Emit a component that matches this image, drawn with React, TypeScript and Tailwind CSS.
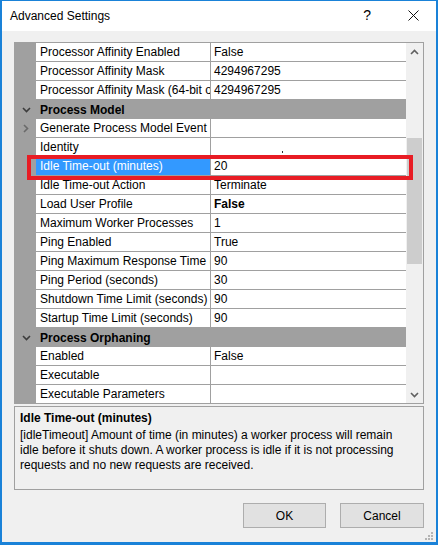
import React from 'react';

type Row =
  | { kind: 'header'; label: string }
  | { kind: 'prop'; name: string; value: string; bold?: boolean; expandable?: boolean; selected?: boolean; dot?: boolean };

const rows: Row[] = [
  { kind: 'prop', name: 'Processor Affinity Enabled', value: 'False' },
  { kind: 'prop', name: 'Processor Affinity Mask', value: '4294967295' },
  { kind: 'prop', name: 'Processor Affinity Mask (64-bit option)', value: '4294967295' },
  { kind: 'header', label: 'Process Model' },
  { kind: 'prop', name: 'Generate Process Model Event Log Entry', value: '', expandable: true },
  { kind: 'prop', name: 'Identity', value: '', dot: true },
  { kind: 'prop', name: 'Idle Time-out (minutes)', value: '20', selected: true },
  { kind: 'prop', name: 'Idle Time-out Action', value: 'Terminate' },
  { kind: 'prop', name: 'Load User Profile', value: 'False', bold: true },
  { kind: 'prop', name: 'Maximum Worker Processes', value: '1' },
  { kind: 'prop', name: 'Ping Enabled', value: 'True' },
  { kind: 'prop', name: 'Ping Maximum Response Time (seconds)', value: '90' },
  { kind: 'prop', name: 'Ping Period (seconds)', value: '30' },
  { kind: 'prop', name: 'Shutdown Time Limit (seconds)', value: '90' },
  { kind: 'prop', name: 'Startup Time Limit (seconds)', value: '90' },
  { kind: 'header', label: 'Process Orphaning' },
  { kind: 'prop', name: 'Enabled', value: 'False' },
  { kind: 'prop', name: 'Executable', value: '' },
  { kind: 'prop', name: 'Executable Parameters', value: '' },
];

const ChevronDown = () => (
  <svg width="9" height="6" viewBox="0 0 9 6" fill="none" stroke="#3c3c3c" strokeWidth="1.6">
    <path d="M1 1l3.5 3.5L8 1" />
  </svg>
);

const ChevronRight = () => (
  <svg width="6" height="9" viewBox="0 0 6 9" fill="none" stroke="#6a6a6a" strokeWidth="1.6">
    <path d="M1 1l3.5 3.5L1 8" />
  </svg>
);

function GridRow({ row }: { row: Row }) {
  if (row.kind === 'header') {
    return (
      <div className="flex h-[19px] shrink-0 items-center bg-[#a0a0a0]">
        <div className="flex w-[21px] shrink-0 justify-center pl-[1px]">
          <ChevronDown />
        </div>
        <span className="pl-[4px] font-bold text-black">{row.label}</span>
      </div>
    );
  }
  return (
    <div className="flex h-[19px] shrink-0">
      <div className="flex w-[21px] shrink-0 items-center justify-center bg-[#a0a0a0] pl-[1px]">
        {row.expandable && <ChevronRight />}
      </div>
      <div
        className={
          row.selected
            ? 'flex w-[175px] shrink-0 items-center overflow-hidden whitespace-nowrap border-r border-b border-[#a0a0a0] bg-[#3399ff] pl-[4px] text-white'
            : 'flex w-[175px] shrink-0 items-center overflow-hidden whitespace-nowrap border-r border-b border-[#a0a0a0] bg-white pl-[4px] text-black'
        }
      >
        {row.name}
      </div>
      <div
        className={
          row.bold
            ? 'flex flex-1 items-center overflow-hidden whitespace-nowrap border-b border-[#a0a0a0] bg-white pl-[3px] font-bold text-black'
            : 'flex flex-1 items-center overflow-hidden whitespace-nowrap border-b border-[#a0a0a0] bg-white pl-[3px] text-black'
        }
      >
        {row.value}
        {row.dot && <span className="mt-[9px] ml-[68px] h-[2px] w-[1px] bg-[#333]" />}
      </div>
    </div>
  );
}

export default function App() {
  return (
    <div
      className="relative flex h-[545px] w-[438px] flex-col border-x-2 border-t border-b-[3px] border-[#1a82d8] bg-[#f0f0f0] text-[12px] text-black"
      style={{ fontFamily: '"Liberation Sans", Arial, sans-serif' }}
    >
      {/* title bar */}
      <div className="flex h-[30px] shrink-0 items-center bg-white pl-[8px] pb-[1px]">
        <span className="text-[12px]">Advanced Settings</span>
        <span className="ml-auto mr-[37px] text-[14px]">?</span>
        <svg width="11" height="11" viewBox="0 0 11 11" stroke="#111" strokeWidth="1" className="mr-[17px]">
          <path d="M0.5 0.5l10 10M10.5 0.5l-10 10" />
        </svg>
      </div>

      {/* property grid */}
      <div className="relative mx-[12px] mt-[11px] flex h-[362px] shrink-0 border border-[#a0a0a0] bg-white">
        <div className="flex flex-1 flex-col overflow-hidden">
          {rows.map((r, i) => (
            <GridRow key={i} row={r} />
          ))}
        </div>
        <div className="flex w-[17px] shrink-0 flex-col bg-[#f0f0f0]">
          <div className="flex h-[17px] items-center justify-center">
            <svg width="9" height="6" viewBox="0 0 9 6" fill="none" stroke="#606060" strokeWidth="1.6">
              <path d="M1 5l3.5-3.5L8 5" />
            </svg>
          </div>
          <div className="mt-[78px] ml-[1px] h-[126px] w-[15px] bg-[#cdcdcd]" />
          <div className="mt-auto flex h-[17px] items-center justify-center">
            <svg width="9" height="6" viewBox="0 0 9 6" fill="none" stroke="#606060" strokeWidth="1.6">
              <path d="M1 1l3.5 3.5L8 1" />
            </svg>
          </div>
        </div>
        {/* highlight box around selected row */}
        <div className="pointer-events-none absolute left-[12px] top-[112px] h-[25px] w-[386px] border-4 border-[#e81c24]" />
      </div>

      {/* description */}
      <div className="mx-[12px] mt-[2px] h-[84px] shrink-0 border border-[#a0a0a0] px-[5px] pt-[4px]">
        <div className="font-bold leading-[15px]">Idle Time-out (minutes)</div>
        <p className="mt-[2px] pr-[18px] leading-[15px]">
          [idleTimeout] Amount of time (in minutes) a worker process will remain idle before it shuts down. A worker
          process is idle if it is not processing requests and no new requests are received.
        </p>
      </div>

      {/* buttons */}
      <div className="mt-[13px] flex justify-end gap-[14px] pr-[12px]">
        <button className="h-[25px] w-[83px] border border-[#adadad] bg-[#e1e1e1] text-[12px]">OK</button>
        <button className="h-[25px] w-[84px] border border-[#adadad] bg-[#e1e1e1] text-[12px]">Cancel</button>
      </div>

      {/* resize grip */}
      <div className="absolute right-[3px] bottom-[2px] grid grid-cols-3 gap-[1px]">
        <span className="h-[2px] w-[2px]" />
        <span className="h-[2px] w-[2px]" />
        <span className="h-[2px] w-[2px] bg-[#b4b4b4]" />
        <span className="h-[2px] w-[2px]" />
        <span className="h-[2px] w-[2px] bg-[#b4b4b4]" />
        <span className="h-[2px] w-[2px] bg-[#b4b4b4]" />
        <span className="h-[2px] w-[2px] bg-[#b4b4b4]" />
        <span className="h-[2px] w-[2px] bg-[#b4b4b4]" />
        <span className="h-[2px] w-[2px] bg-[#b4b4b4]" />
      </div>
    </div>
  );
}
